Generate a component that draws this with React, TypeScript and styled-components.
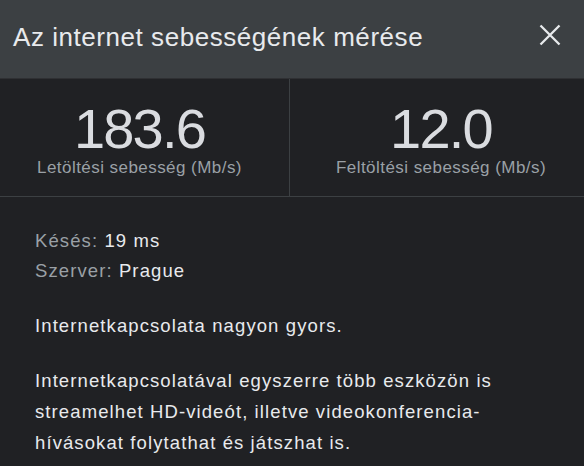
import React from "react";
import styled, { createGlobalStyle } from "styled-components";

const Global = createGlobalStyle`
  html, body { margin: 0; padding: 0; background: #202124; }
  body { font-family: "Liberation Sans", Arial, sans-serif; }
`;

const Dialog = styled.div`
  width: 584px;
  height: 466px;
  background: #202124;
  overflow: hidden;
  font-family: "Liberation Sans", Arial, sans-serif;
`;

const Header = styled.div`
  height: 78px;
  background: #3c4043;
  display: flex;
  align-items: center;
  justify-content: space-between;
  padding: 0 23px 4px 13px;
  box-sizing: border-box;
`;

const Title = styled.h1`
  margin: 0;
  font-size: 26px;
  font-weight: 400;
  letter-spacing: 0.55px;
  color: #e8eaed;
`;

const CloseButton = styled.button`
  background: none;
  border: none;
  padding: 0;
  margin-bottom: 5px;
  width: 22px;
  height: 22px;
  display: flex;
  align-items: center;
  justify-content: center;
  color: #e8eaed;
  cursor: pointer;
`;

const Stats = styled.div`
  display: grid;
  grid-template-columns: 290px 1fr;
  border-top: 1px solid #2f3033;
  border-bottom: 1px solid #3c4043;
  height: 119px;
  box-sizing: border-box;
`;

const Stat = styled.div<{ $divider?: boolean; $shift: number }>`
  display: flex;
  flex-direction: column;
  align-items: center;
  padding-top: 22px;
  padding-left: ${(p) => (p.$shift > 0 ? p.$shift : 0)}px;
  padding-right: ${(p) => (p.$shift < 0 ? -p.$shift : 0)}px;
  border-right: ${(p) => (p.$divider ? "1px solid #3c4043" : "none")};
`;

const Value = styled.div`
  font-size: 56px;
  line-height: 56px;
  letter-spacing: -1.8px;
  color: #dadce0;
`;

const Label = styled.div`
  font-size: 17px;
  line-height: 22px;
  letter-spacing: 0.45px;
  color: #9aa0a6;
`;

const Body = styled.div`
  padding: 29px 35px 0;
  color: #e8eaed;
  font-size: 18.5px;
  letter-spacing: 1.1px;
`;

const InfoRow = styled.div`
  line-height: 30px;
`;

const Key = styled.span`
  color: #9aa0a6;
`;

const Para = styled.p`
  margin: 24px 0 0;
  line-height: 31px;
`;

export default function App() {
  return (
    <>
      <Global />
      <Dialog>
        <Header>
          <Title>Az internet sebességének mérése</Title>
          <CloseButton aria-label="Bezárás">
            <svg width="22" height="22" viewBox="0 0 22 22">
              <path d="M1.5 1.5 L20.5 20.5 M20.5 1.5 L1.5 20.5" stroke="currentColor" strokeWidth="2.3" fill="none" />
            </svg>
          </CloseButton>
        </Header>
        <Stats>
          <Stat $divider $shift={-10}>
            <Value>183.6</Value>
            <Label>Letöltési sebesség (Mb/s)</Label>
          </Stat>
          <Stat $shift={8}>
            <Value>12.0</Value>
            <Label>Feltöltési sebesség (Mb/s)</Label>
          </Stat>
        </Stats>
        <Body>
          <InfoRow>
            <Key>Késés:</Key> 19 ms
          </InfoRow>
          <InfoRow>
            <Key>Szerver:</Key> Prague
          </InfoRow>
          <Para>Internetkapcsolata nagyon gyors.</Para>
          <Para>
            Internetkapcsolatával egyszerre több eszközön is streamelhet HD-videót, illetve videokonferencia-hívásokat folytathat és játszhat is.
          </Para>
        </Body>
      </Dialog>
    </>
  );
}
